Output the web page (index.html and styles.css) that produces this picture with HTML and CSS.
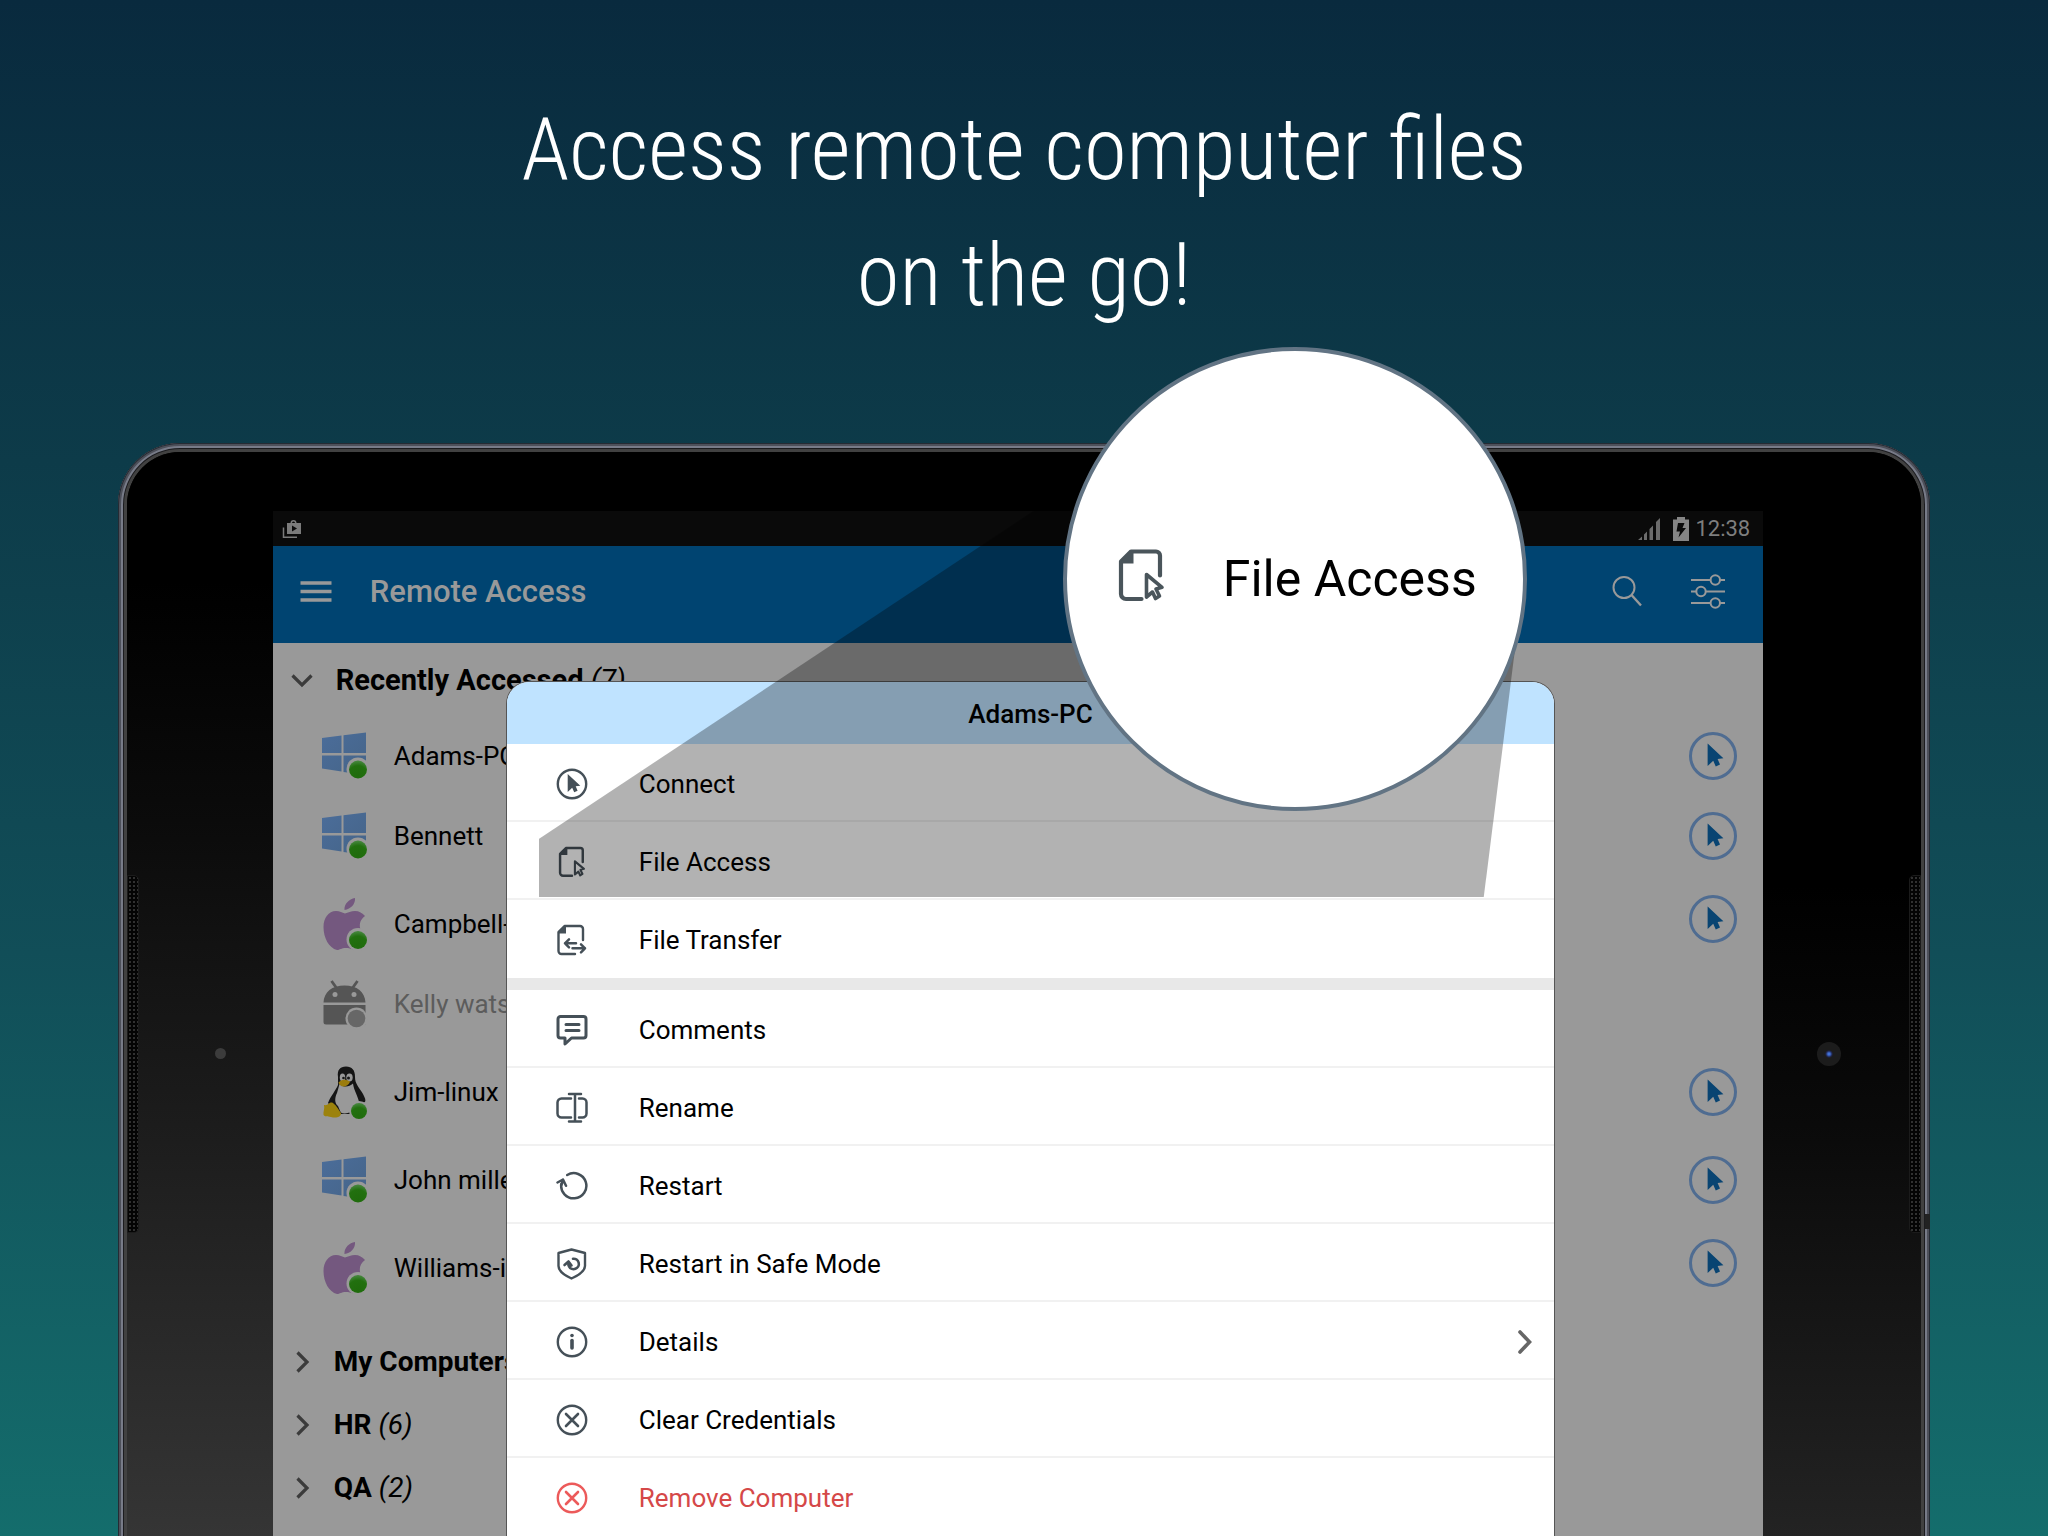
FILE: index.html
```html
<!DOCTYPE html>
<html lang="en">
<head>
    <meta charset="UTF-8">
    <meta name="viewport" content="width=device-width, initial-scale=1.0">
    <title>Remote Access</title>
    <link rel="stylesheet" href="styles.css">
</head>
<body>
    <!-- shared icons -->
    <svg class="sprite" aria-hidden="true">
        <defs>
            <radialGradient id="green" cx="50%" cy="85%" r="80%">
                <stop offset="0" stop-color="#1f6b0c"/>
                <stop offset="0.7" stop-color="#22700f"/>
                <stop offset="1" stop-color="#43843a"/>
            </radialGradient>
            <linearGradient id="winFill" x1="0" y1="0" x2="1" y2="1">
                <stop offset="0" stop-color="#4b6d9a"/>
                <stop offset="1" stop-color="#456488"/>
            </linearGradient>
        </defs>
        <symbol id="cursor" viewBox="0 0 32 32">
            <path d="M11.7 6L24.3 17.7L19.7 18.3L21.6 22.8L18.2 24.3L16.2 19.8L11.7 24z" fill="currentColor"/>
        </symbol>
        <symbol id="connect" viewBox="0 0 32 32">
            <circle cx="16" cy="16" r="14.2" fill="none" stroke="currentColor" stroke-width="2.4"/>
            <path d="M11.7 6L24.3 17.7L19.7 18.3L21.6 22.8L18.2 24.3L16.2 19.8L11.7 24z" fill="currentColor"/>
        </symbol>
        <symbol id="file-access" viewBox="-5 -1.5 55 55">
            <path d="M22.5 49.5H7a5 5 0 0 1-5-5V12L12 2h25a4 4 0 0 1 4 4v20" fill="none" stroke="currentColor" stroke-width="4.2" stroke-linecap="round" stroke-linejoin="round"/>
            <path d="M2 12L12 2h2.500v12H2z" fill="currentColor"/>
            <path d="M27.500 25L43 37.800L37 39.500L40.500 46.500L36.500 49L33.500 42.500L27.500 47.500z" fill="none" stroke="currentColor" stroke-width="3.600" stroke-linejoin="round"/>
        </symbol>
        <symbol id="file-transfer" viewBox="0 0 32 32">
            <path d="M19 30H5.500a3 3 0 0 1-3-3V8L8.500 2H24a3 3 0 0 1 3 3v11" fill="none" stroke="currentColor" stroke-width="2.400" stroke-linecap="round" stroke-linejoin="round"/>
            <path d="M2.500 8L8.500 2H10v7.500H2.500z" fill="currentColor"/>
            <path d="M20 19.300H9M13 15.300l-4 4l4 4M16.500 24.300H29M25 20.300l4 4l-4 4" fill="none" stroke="currentColor" stroke-width="2.500" stroke-linecap="round" stroke-linejoin="round"/>
        </symbol>
        <symbol id="comments" viewBox="0 0 32 32">
            <path d="M4.500 2.500h23a2.500 2.500 0 0 1 2.500 2.500v16.500a2.500 2.500 0 0 1-2.500 2.500H15.500L9 30V24H4.500A2.500 2.500 0 0 1 2 21.500V5a2.500 2.500 0 0 1 2.500-2.500z" fill="none" stroke="currentColor" stroke-width="3" stroke-linejoin="round"/>
            <path d="M10 10.500h13M10 16.500h13" stroke="currentColor" stroke-width="3" stroke-linecap="round"/>
        </symbol>
        <symbol id="rename" viewBox="0 0 32 32">
            <path d="M15 6.500H5.500A4 4 0 0 0 1.500 10.500v11a4 4 0 0 0 4 4H15M23 6.500h3.500a4 4 0 0 1 4 4v11a4 4 0 0 1-4 4H23M19 2v27.500M13 2h12M13 29.500h12" fill="none" stroke="currentColor" stroke-width="2.500" stroke-linecap="round"/>
        </symbol>
        <symbol id="restart" viewBox="0 0 32 32">
            <path d="M11.200 5A12.600 12.600 0 1 1 5.300 13.800M1.500 12.500L7 9.500L10 15.800M7 9.500L5.300 16" fill="none" stroke="currentColor" stroke-width="2.500" stroke-linecap="round" stroke-linejoin="round"/>
        </symbol>
        <symbol id="safe" viewBox="0 0 32 32">
            <path d="M15.500 1.500L29 5v13c0 6-8 10-13.500 12.500C10 28 2.500 24 2.500 18V5z" fill="none" stroke="currentColor" stroke-width="2.400" stroke-linejoin="round"/>
            <path d="M17 10.800A5.200 5.200 0 1 1 13 18.300M8.500 17l4-3.500l3 4M12.500 13.500v4" fill="none" stroke="currentColor" stroke-width="2.600" stroke-linecap="round" stroke-linejoin="round"/>
        </symbol>
        <symbol id="details" viewBox="0 0 32 32">
            <circle cx="16" cy="16" r="14.200" fill="none" stroke="currentColor" stroke-width="2.400"/>
            <circle cx="16" cy="9.500" r="1.800" fill="currentColor"/>
            <path d="M16 14.500v7.500" stroke="currentColor" stroke-width="3.600" stroke-linecap="round"/>
        </symbol>
        <symbol id="clear" viewBox="0 0 32 32">
            <circle cx="16" cy="16" r="14.200" fill="none" stroke="currentColor" stroke-width="2.400"/>
            <path d="M10 10l12 12M22 10L10 22" stroke="currentColor" stroke-width="2.600" stroke-linecap="round"/>
        </symbol>
        <symbol id="chevron" viewBox="0 0 24 24">
            <path d="M7.500 2.500L17 12L7.500 21.500" fill="none" stroke="currentColor" stroke-width="3.200"/>
        </symbol>
        <symbol id="windows" viewBox="0 0 48 54">
            <path d="M2 9L21.500 6.500V24H2zM23.500 6.200L46 3.500V24H23.500zM2 26.500H21.500V42.500L2 39.500zM23.500 26.500H46V46L23.500 43z" fill="url(#winFill)"/>
            <circle cx="38" cy="40" r="11.500" fill="#999"/>
            <circle cx="38" cy="40.500" r="9" fill="url(#green)"/>
        </symbol>
        <symbol id="apple" viewBox="0 0 48 54">
            <path d="M35 1c.5 6-4 11-10.500 12C24 7 29 2 35 1zM25 16.500c3-1 6-2.500 10-2.500c4 0 7.500 2 10 5c-6 4-7 12-2 17.500c1 1 2 2 3 2.500c-2 6-5 12-10 14c-4 0-5-2-10-2s-6 2-9 2C9 51 3.500 41 3.500 30c0-9 5-16 12.500-16c4 0 6 1.500 9 2.500z" fill="#74587f"/>
            <circle cx="38" cy="42.500" r="11.500" fill="#999"/>
            <circle cx="38" cy="43" r="9" fill="url(#green)"/>
        </symbol>
        <symbol id="android" viewBox="0 0 48 54">
            <path d="M3.500 25.500C4 15 12 8.500 24.500 8.500S45 15 45.500 25.500zM3.500 28H45.500V47.500H6a2.500 2.500 0 0 1-2.500-2.500z" fill="#555"/>
            <path d="M16.500 11L11.500 4M32.500 11L37.500 4" stroke="#555" stroke-width="2.800"/>
            <circle cx="15" cy="17.500" r="2.500" fill="#999"/>
            <circle cx="34" cy="17.500" r="2.500" fill="#999"/>
            <circle cx="36.500" cy="41.500" r="11" fill="#999"/>
            <circle cx="36.500" cy="41.500" r="8.800" fill="#676767"/>
        </symbol>
        <symbol id="tux" viewBox="0 0 48 54">
            <path d="M18 12C17 5 20 1.500 26 1.500S35 5 35 12c0 7 4 10 8 17c2 4 3 6 2 8l-8 2l-1 10H18L8 38c2-6 8-13 10-18z" fill="#151515"/>
            <path d="M19.500 19C23 22.500 29 22.500 33 18.500C34 26 38 31 39 37C36 43 33 48 25 48.500C20 49 20 45 18 41C14 38 15 32 17 28z" fill="#999"/>
            <ellipse cx="22.500" cy="12.500" rx="2.700" ry="4" fill="#999"/>
            <ellipse cx="29.500" cy="12.500" rx="3.200" ry="4" fill="#999"/>
            <circle cx="23.500" cy="13" r="1.300" fill="#151515"/>
            <circle cx="28.500" cy="13" r="1.500" fill="#151515"/>
            <path d="M18.500 17.500C21 14.500 25 13.500 30 16.500C29 20 26 21.500 23.500 21.500S19 19.500 18.500 17.500z" fill="#9b7c0c"/>
            <path d="M4 40C9 41 9 36 13 38C17 41 18 44 21 48C21 53 15 53 11 52C7 51 5 52 3.500 50C3 47 5 43 4 40z" fill="#9c820c"/>
            <circle cx="39" cy="46" r="10" fill="#999"/>
            <circle cx="39" cy="46" r="8" fill="url(#green)"/>
        </symbol>
    </svg>

    <header class="hero">
        <h1>Access remote computer files<br>on the go!</h1>
    </header>

    <div class="tablet">
        <div class="bezel bezel-left">
            <span class="speaker"></span>
            <span class="sensor"></span>
        </div>

        <main class="screen">
            <div class="status-bar">
                <svg class="status-icon" viewBox="0 0 20 20">
                    <path d="M5 4h3.500a3 3 0 0 1 6 0H19V15H5zM10 4h3a1.500 1.500 0 0 0-3 0z" fill="#7b7b7b" fill-rule="evenodd"/>
                    <path d="M10 6.500v6l5-3z" fill="#0a0a0a"/>
                    <path d="M1.500 8.500V18.300H15" fill="none" stroke="#7b7b7b" stroke-width="1.500"/>
                </svg>
                <span class="spacer"></span>
                <svg class="signal" viewBox="0 0 24 24">
                    <path d="M1 23L5 19.500V23zM7 17.500l3-3V23H7zM12.500 12l3.500-3.500V23h-3.500zM19 5l4-4v22h-4z" fill="#6c6c6c"/>
                </svg>
                <svg class="battery" viewBox="0 0 16 24">
                    <path d="M4 0h8v2.500h4V24H0V2.500h4z" fill="#858585"/>
                    <path d="M5 6h6.500L9.500 11H13L5.500 20.500L7 14.500H3.500z" fill="#0a0a0a"/>
                </svg>
                <time>12:38</time>
            </div>

            <div class="app-bar">
                <button class="icon-button" aria-label="Menu">
                    <svg width="32" height="32" viewBox="0 0 32 32">
                        <path d="M0.500 7h31M0.500 15.500h31M0.500 24h31" stroke="#999" stroke-width="3.500"/>
                    </svg>
                </button>
                <h2>Remote Access</h2>
                <span class="spacer"></span>
                <button class="icon-button" aria-label="Search">
                    <svg width="32" height="32" viewBox="0 0 32 32">
                        <circle cx="12" cy="11.500" r="10.500" fill="none" stroke="#999" stroke-width="2"/>
                        <path d="M19.500 19L29 29.500" stroke="#999" stroke-width="2.400"/>
                    </svg>
                </button>
                <button class="icon-button" aria-label="Filters">
                    <svg width="36" height="36" viewBox="0 0 36 36" fill="none" stroke="#999" stroke-width="2">
                        <path d="M1 6h19.500M30 6h5M1 17.500h5M16 17.500h19M1 29h19.500M30 29h5"/>
                        <circle cx="25.300" cy="6" r="4.700"/>
                        <circle cx="11" cy="17.500" r="4.700"/>
                        <circle cx="25.300" cy="29" r="4.700"/>
                    </svg>
                </button>
            </div>

            <button class="group group-open">
                <svg class="arrow arrow-down"><use href="#chevron"/></svg>
                <span><b>Recently Accessed</b> <i>(7)</i></span>
            </button>
            <ul class="computers">
                <li>
                    <svg class="os"><use href="#windows"/></svg>
                    <span class="name">Adams-PC</span>
                    <button class="go" aria-label="Connect to Adams-PC"><svg><use href="#cursor"/></svg></button>
                </li>
                <li>
                    <svg class="os"><use href="#windows"/></svg>
                    <span class="name">Bennett</span>
                    <button class="go" aria-label="Connect to Bennett"><svg><use href="#cursor"/></svg></button>
                </li>
                <li class="spaced mac">
                    <svg class="os"><use href="#apple"/></svg>
                    <span class="name">Campbell-iMac</span>
                    <button class="go" aria-label="Connect to Campbell"><svg><use href="#cursor"/></svg></button>
                </li>
                <li class="offline">
                    <svg class="os"><use href="#android"/></svg>
                    <span class="name">Kelly watson</span>
                </li>
                <li class="spaced">
                    <svg class="os"><use href="#tux"/></svg>
                    <span class="name">Jim-linux</span>
                    <button class="go" aria-label="Connect to Jim-linux"><svg><use href="#cursor"/></svg></button>
                </li>
                <li class="spaced">
                    <svg class="os"><use href="#windows"/></svg>
                    <span class="name">John miller</span>
                    <button class="go" aria-label="Connect to John"><svg><use href="#cursor"/></svg></button>
                </li>
                <li class="spaced mac">
                    <svg class="os"><use href="#apple"/></svg>
                    <span class="name">Williams-iMac</span>
                    <button class="go" aria-label="Connect to Williams"><svg><use href="#cursor"/></svg></button>
                </li>
            </ul>
            <button class="group">
                <svg class="arrow"><use href="#chevron"/></svg>
                <span><b>My Computers</b></span>
            </button>
            <button class="group">
                <svg class="arrow"><use href="#chevron"/></svg>
                <span><b>HR</b> <i>(6)</i></span>
            </button>
            <button class="group">
                <svg class="arrow"><use href="#chevron"/></svg>
                <span><b>QA</b> <i>(2)</i></span>
            </button>

            <div class="dialog" role="dialog" aria-labelledby="dialogTitle">
                <h3 id="dialogTitle">Adams-PC</h3>
                <div class="menu">
                    <button><svg><use href="#connect"/></svg>Connect</button>
                    <button><svg><use href="#file-access"/></svg>File Access</button>
                    <button><svg><use href="#file-transfer"/></svg>File Transfer</button>
                </div>
                <div class="menu">
                    <button><svg><use href="#comments"/></svg>Comments</button>
                    <button><svg><use href="#rename"/></svg>Rename</button>
                    <button><svg><use href="#restart"/></svg>Restart</button>
                    <button><svg><use href="#safe"/></svg>Restart in Safe Mode</button>
                    <button><svg><use href="#details"/></svg>Details
                        <svg class="more" viewBox="0 0 16 28"><path d="M3 4L12.500 14L3 24" fill="none" stroke="#666" stroke-width="3.600" stroke-linecap="round"/></svg>
                    </button>
                    <button><svg><use href="#clear"/></svg>Clear Credentials</button>
                    <button class="danger"><svg><use href="#clear"/></svg>Remove Computer</button>
                </div>
            </div>
        </main>

        <div class="bezel bezel-right">
            <span class="camera"></span>
            <span class="speaker"></span>
        </div>

        <span class="side-key"></span>
        <div class="beam"></div>
        <div class="magnifier">
            <svg><use href="#file-access"/></svg>
            <span>File Access</span>
        </div>
    </div>
</body>
</html>
```

FILE: styles.css
```css
* {
    box-sizing: border-box;
}
body {
    margin: 0;
    min-height: 100vh;
    display: flex;
    flex-direction: column;
    overflow: hidden;
    font-family: Roboto, "Liberation Sans", sans-serif;
    font-size: 26px;
    color: #000;
    background: linear-gradient(#092a3e, #0d3b49 30%, #114e58 62%, #146d6c);
}
button {
    font: inherit;
    color: inherit;
    background: none;
    border: none;
    padding: 0;
    text-align: left;
    cursor: pointer;
}
h1, h2, h3, ul {
    margin: 0;
    padding: 0;
    list-style: none;
}
svg {
    flex: none;
}
.sprite {
    position: absolute;
    width: 0;
    height: 0;
}
.spacer {
    flex: 1;
}

/* headline */
.hero {
    padding: 86px 24px 105px;
    text-align: center;
    color: #fff;
}
.hero h1 {
    font-family: "Roboto Condensed", "Liberation Sans Narrow", Roboto, sans-serif;
    font-size: 87px;
    font-weight: 300;
    line-height: 126px;
}

/* tablet, runs off the bottom edge */
.tablet {
    position: relative;
    flex: 1;
    display: flex;
    width: 88.5%;
    margin: 0 auto -10px;
    padding: 9px 9px 10px;
    border-radius: 62px 62px 0 0;
    background: #000;
    box-shadow: inset 0 0 0 1px #252b34, inset 0 0 0 3px #4d505a, inset 0 0 0 5px #777b88, inset 0 0 0 6px #1c1c1f, inset 0 0 0 9px #414141;
}
.bezel {
    position: relative;
    flex: none;
    display: flex;
    justify-content: space-between;
    align-items: center;
    padding-top: 118px;
}
.bezel-left {
    width: 146px;
    border-top-left-radius: 53px;
    background: linear-gradient(#000 12%, #0b0b0b 34%, #1c1c1c 62%, #353535);
}
.bezel-right {
    width: 158px;
    border-top-right-radius: 53px;
    background: linear-gradient(#000 40%, #0a0a0a 62%, #232323);
}
.speaker {
    width: 12px;
    height: 358px;
    border-radius: 0 5px 5px 0;
    border: 1px solid #1b1b1b;
    background: radial-gradient(circle, #383838 20%, #040404 55%) 0 0 / 4px 4px;
}
.bezel-right .speaker {
    border-radius: 5px 0 0 5px;
}
.sensor {
    width: 11px;
    height: 11px;
    margin-right: 47px;
    border-radius: 50%;
    background: #3c3c3c;
}
.camera {
    width: 24px;
    height: 24px;
    margin-left: 54px;
    border-radius: 50%;
    background: radial-gradient(circle, #4272d8 1px, #20264f 3px, #1c1c1c 4px);
}
.side-key {
    position: absolute;
    right: 0;
    top: 771px;
    width: 5px;
    height: 15px;
    background: #222;
}

/* app on the tablet, dimmed behind the dialog */
.screen {
    position: relative;
    flex: 1;
    min-width: 0;
    margin-top: 59px;
    padding-bottom: 18px;
    overflow: hidden;
    background: #999;
}
.status-bar {
    display: flex;
    align-items: center;
    height: 35px;
    padding: 0 13px 0 9px;
    font-size: 22px;
    color: #7e7e7e;
    background: #0a0a0a;
}
.status-icon {
    width: 20px;
    height: 20px;
}
.signal {
    width: 24px;
    height: 24px;
    margin-right: 12px;
}
.battery {
    width: 16px;
    height: 24px;
    margin-right: 6px;
}
.app-bar {
    display: flex;
    align-items: center;
    height: 97px;
    padding: 0 37px 6px 27px;
    color: #999;
    background: #004471;
}
.app-bar h2 {
    margin-left: 38px;
    font-size: 31px;
    font-weight: 500;
}
.icon-button {
    display: flex;
}
.icon-button + .icon-button {
    margin-left: 46px;
}
.group {
    display: flex;
    align-items: center;
    gap: 20px;
    width: 100%;
    height: 63px;
    padding-left: 17px;
    font-size: 28px;
}
.group-open {
    height: 73px;
    gap: 22px;
    font-size: 29px;
}
.group i {
    font-weight: 400;
}
.arrow {
    width: 24px;
    height: 24px;
    color: #3b3b3b;
}
.arrow-down {
    transform: rotate(90deg);
}
.computers {
    padding-bottom: 22px;
}
.computers li {
    display: flex;
    align-items: center;
    height: 80px;
    padding: 0 26px 0 47px;
}
.computers .spaced {
    margin-top: 8px;
}
.os {
    width: 48px;
    height: 54px;
    margin-right: 26px;
}
.name {
    flex: 1;
}
.offline .name {
    color: #5c5c5c;
}
.go {
    display: flex;
    justify-content: center;
    align-items: center;
    width: 48px;
    height: 48px;
    border: 3px solid #4f6c91;
    border-radius: 50%;
    color: #084472;
}
.go svg {
    width: 40px;
    height: 40px;
}
.mac .go {
    margin-bottom: 10px;
}

/* dialog */
.dialog {
    position: absolute;
    top: 171px;
    left: 234px;
    right: 209px;
    bottom: 0;
    border-radius: 22px 22px 0 0;
    background: #fff;
    box-shadow: 0 0 0 1px #555;
    overflow: hidden;
}
.dialog h3 {
    height: 62px;
    line-height: 64px;
    font-size: 26px;
    font-weight: 500;
    text-align: center;
    background: #bfe3ff;
}
.menu + .menu {
    border-top: 12px solid #e8e8e8;
}
.menu button {
    display: flex;
    align-items: center;
    gap: 51px;
    width: 100%;
    height: 78px;
    padding: 4px 21px 0 49px;
    border-bottom: 2px solid #f1f1f1;
}
.menu button:last-child {
    border-bottom-color: transparent;
}
.menu svg {
    width: 32px;
    height: 32px;
    color: #455058;
}
.menu .more {
    width: 16px;
    height: 28px;
    margin-left: auto;
}
.menu .danger {
    color: #d54848;
}
.menu .danger svg {
    color: #ec5a5a;
}

/* callout */
.beam {
    position: absolute;
    top: -29px;
    left: 421px;
    width: 987px;
    height: 483px;
    background: rgba(0, 0, 0, 0.3);
    clip-path: polygon(0 425px, 641px 0, 987px 150px, 945px 483px, 0 483px);
}
.magnifier {
    position: absolute;
    top: -96px;
    left: 945px;
    display: flex;
    align-items: center;
    gap: 54px;
    width: 464px;
    height: 464px;
    padding-left: 47px;
    border: 4px solid #627484;
    border-radius: 50%;
    background: #fff;
    font-size: 50px;
    white-space: nowrap;
}
.magnifier svg {
    width: 55px;
    height: 55px;
    margin-bottom: 8px;
    color: #4a555b;
}
```
